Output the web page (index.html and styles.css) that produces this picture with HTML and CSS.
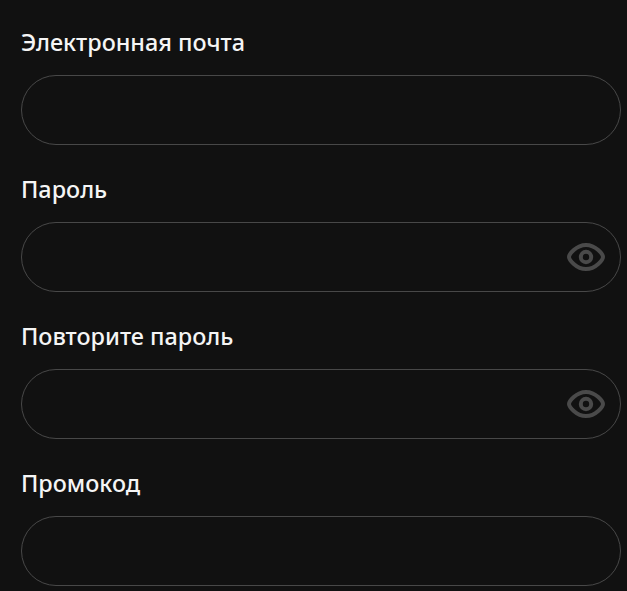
FILE: index.html
```html
<!DOCTYPE html>
<html lang="en">

<head>
    <meta charset="UTF-8" />
    <meta name="viewport" content="width=device-width, initial-scale=1.0" />
    <title>Регистрация</title>
    <link rel="stylesheet" href="styles.css">
</head>

<body>
    <form class="form">
        <div class="field">
            <label for="email">Электронная почта</label>
            <div class="input-wrap">
                <input type="text" id="email" />
            </div>
        </div>

        <div class="field">
            <label for="password">Пароль</label>
            <div class="input-wrap">
                <input type="password" id="password" />
                <svg class="eye" viewBox="0 0 38 28" fill="none" stroke="#4a4a4a" stroke-width="4">
                    <path d="M2 14C2 11.5 9 2 19 2S36 11.5 36 14S29 26 19 26S2 16.5 2 14Z" />
                    <circle cx="19" cy="14" r="5.2" />
                </svg>
            </div>
        </div>

        <div class="field">
            <label for="password2">Повторите пароль</label>
            <div class="input-wrap">
                <input type="password" id="password2" />
                <svg class="eye" viewBox="0 0 38 28" fill="none" stroke="#4a4a4a" stroke-width="4">
                    <path d="M2 14C2 11.5 9 2 19 2S36 11.5 36 14S29 26 19 26S2 16.5 2 14Z" />
                    <circle cx="19" cy="14" r="5.2" />
                </svg>
            </div>
        </div>

        <div class="field">
            <label for="promo">Промокод</label>
            <div class="input-wrap">
                <input type="text" id="promo" />
            </div>
        </div>
    </form>
</body>

</html>
```
FILE: styles.css
```css
html,
body {
    height: 100%;
}

body {
    margin: 0;
    background-color: #111111;
    font-family: "Noto Sans", "Open Sans", sans-serif;
    overflow: hidden;
}

.form {
    display: flex;
    flex-direction: column;
    gap: 28px;
    padding: 26px 6px 0 21px;
}

.field label {
    display: block;
    height: 33px;
    margin-bottom: 16px;
    color: #f5f5f5;
    font-size: 23.4px;
    font-weight: 500;
    line-height: 33px;
}

.input-wrap {
    position: relative;
}

input {
    display: block;
    width: 100%;
    height: 70px;
    padding: 0 24px;
    box-sizing: border-box;
    background: transparent;
    border: 1px solid #484848;
    border-radius: 35px;
    color: #f5f5f5;
    font-size: 20px;
    outline: none;
}

.eye {
    position: absolute;
    top: 21px;
    right: 16px;
    width: 38px;
    height: 28px;
}
```
